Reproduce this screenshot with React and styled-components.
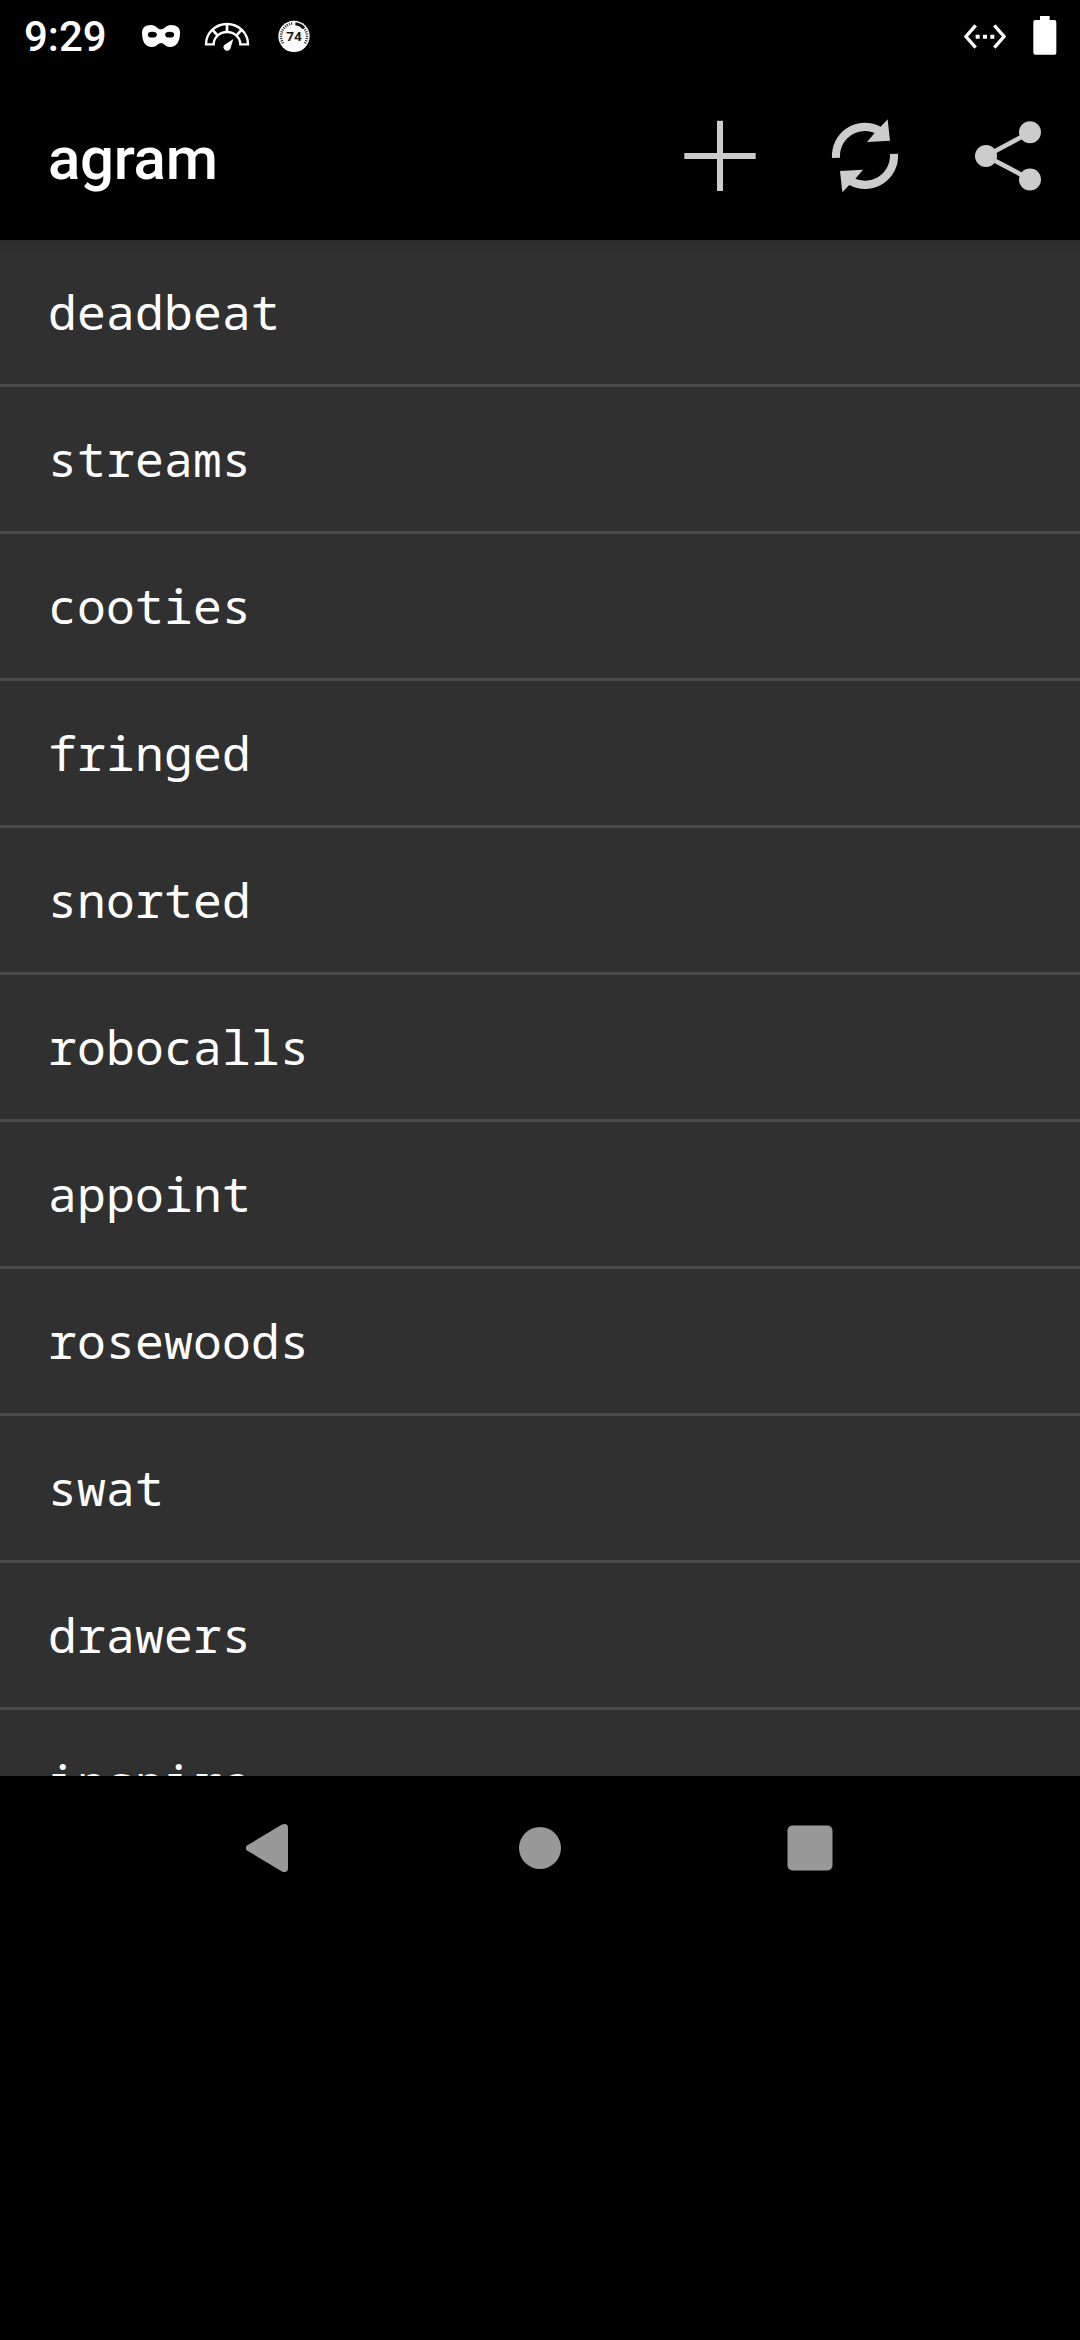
import React from "react";
import styled, { createGlobalStyle } from "styled-components";

const GlobalStyle = createGlobalStyle`
  body {
    margin: 0;
    background: #000;
  }
  * {
    box-sizing: border-box;
  }
`;

const Screen = styled.div`
  display: flex;
  flex-direction: column;
  width: 1080px;
  height: 2340px;
  overflow: hidden;
  background: #000;
  color: #fff;
  font-family: Roboto, "Liberation Sans", sans-serif;
`;

const StatusBar = styled.header`
  display: flex;
  align-items: center;
  justify-content: space-between;
  flex: none;
  height: 72px;
  padding: 0 23px 0 24px;
`;

const StatusGroup = styled.div`
  display: flex;
  align-items: center;
  gap: ${(p) => p.$gap}px;
`;

const Clock = styled.time`
  width: 90px;
  font-size: 42px;
  font-weight: 500;
  line-height: 48px;
  padding-top: 2px;
  white-space: nowrap;
`;

const StatusIcon = styled.svg`
  display: block;
  width: ${(p) => p.$width}px;
  height: 72px;
`;

const BadgeNumber = styled.text`
  font-family: Roboto, "Liberation Sans", sans-serif;
  font-size: 41px;
  font-weight: 700;
  fill: #151515;
`;

const AppBar = styled.div`
  display: flex;
  align-items: center;
  justify-content: space-between;
  flex: none;
  height: 168px;
  padding-left: 48px;
`;

const Title = styled.h1`
  margin: 0;
  padding-top: 5px;
  font-size: 60px;
  font-weight: 500;
  line-height: 72px;
  letter-spacing: -0.3px;
`;

const Actions = styled.div`
  display: flex;
`;

const ActionButton = styled.button`
  width: 144px;
  height: 144px;
  padding: 0;
  border: 0;
  background: none;
  color: #cccccc;
`;

const ActionIcon = styled.svg`
  display: block;
  width: 144px;
  height: 144px;
`;

const WordList = styled.ul`
  flex: none;
  height: 1536px;
  margin: 0;
  padding: 0;
  overflow: hidden;
  list-style: none;
  background: linear-gradient(#2c2c2c, #303030 14px);
`;

const WordRow = styled.li`
  display: flex;
  align-items: center;
  height: 147px;
  padding: 0 48px;
  border-bottom: 3px solid #4a4a4a;
  font-family: "Droid Sans Mono", "Noto Sans Mono", "DejaVu Sans Mono", monospace;
  font-size: 48px;
  line-height: 56px;
  letter-spacing: 0.2px;
`;

const NavBar = styled.nav`
  display: flex;
  justify-content: center;
  align-items: center;
  gap: 126px;
  flex: none;
  height: 144px;
  color: #999999;
`;

const NavButton = styled.button`
  width: 144px;
  height: 144px;
  padding: 0;
  border: 0;
  background: none;
  color: inherit;
`;

const words = [
  "deadbeat",
  "streams",
  "cooties",
  "fringed",
  "snorted",
  "robocalls",
  "appoint",
  "rosewoods",
  "swat",
  "drawers",
  "inspire",
];

// Minute marks round the badge, clockwise from the lower left.
const ticks = Array.from({ length: 25 }, (_, i) => -120 + i * 10).filter(
  (a) => a < 0 || a > 48
);

function MaskIcon() {
  return (
    <StatusIcon $width={38} viewBox="426 0 114 216">
      <path
        fill="#fff"
        d="M453 75C468 75 473 88 483 88S498 75 513 75C531 75 540 84 540 98C540 124 530 141 510 141C495 141 493 129 483 129S471 141 456 141C436 141 426 124 426 98C426 84 435 75 453 75Z"
      />
      <ellipse cx="457" cy="104" rx="13.5" ry="8.500" />
      <ellipse cx="509" cy="104" rx="13.5" ry="8.500" />
    </StatusIcon>
  );
}

function GaugeIcon() {
  return (
    <StatusIcon $width={46} viewBox="612 0 138 216">
      <g fill="none" stroke="#fff" strokeWidth="7">
        <path d="M618 133A63 61 0 0 1 744 133H721A40 37 0 0 0 641 133Z" />
        <path d="M681 73V96M637 89L653 107M725 89L709 107" strokeWidth="8" />
      </g>
      <path fill="#fff" d="M700 117L691 146A10.500 10.500 0 1 1 672 136Z" />
    </StatusIcon>
  );
}

function ScoreBadge() {
  return (
    <StatusIcon $width={32} viewBox="833 0 96 216">
      <circle cx="881" cy="109" r="47" fill="#fff" />
      <g stroke="#222" strokeWidth="3">
        {ticks.map((a) => (
          <path key={a} d="M881 66V74" transform={`rotate(${a} 881 109)`} />
        ))}
      </g>
      <path d="M885 71.500A38 38 0 0 1 910 84" fill="none" stroke="#111" strokeWidth="9" />
      <BadgeNumber x="881" y="124" textAnchor="middle" textLength="47" lengthAdjust="spacingAndGlyphs">
        74
      </BadgeNumber>
    </StatusIcon>
  );
}

function EthernetIcon() {
  return (
    <StatusIcon $width={42} viewBox="71 0 126 216">
      <path d="M106 76L77 109.500L106 143M162 76L191 109.500L162 143" fill="none" stroke="#fff" strokeWidth="10" />
      <path d="M106 104h12v12h-12zM128 104h12v12h-12zM150 104h12v12h-12z" fill="#fff" />
    </StatusIcon>
  );
}

function BatteryIcon() {
  return (
    <StatusIcon $width={24} viewBox="278 0 72 216">
      <path d="M299 48h29v12h14q6 0 6 6v92q0 6-6 6h-57q-6 0-6-6v-92q0-6 6-6h14z" fill="#fff" />
    </StatusIcon>
  );
}

function RefreshArrow({ turned }) {
  return (
    <g transform={turned ? "rotate(180 615 197.5)" : undefined}>
      <path
        fill="currentColor"
        d="M516 204A99 99 0 0 1 662 110L683 88L690 152L621 156L644 129A75 75 0 0 0 540 203Z"
      />
    </g>
  );
}

export default function App() {
  return (
    <>
      <GlobalStyle />
      <Screen>
        <StatusBar>
          <StatusGroup $gap={28}>
            <Clock>9:29</Clock>
            <StatusGroup $gap={28}>
              <StatusGroup $gap={24}>
                <MaskIcon />
                <GaugeIcon />
              </StatusGroup>
              <ScoreBadge />
            </StatusGroup>
          </StatusGroup>
          <StatusGroup $gap={27}>
            <EthernetIcon />
            <BatteryIcon />
          </StatusGroup>
        </StatusBar>
        <AppBar>
          <Title>agram</Title>
          <Actions>
            <ActionButton>
              <ActionIcon viewBox="-36 -18 432 432">
                <path d="M171 92h18v97h98v18h-98v96h-18v-96h-98v-18h98z" fill="currentColor" />
              </ActionIcon>
            </ActionButton>
            <ActionButton>
              <ActionIcon viewBox="396 -18 432 432">
                <RefreshArrow />
                <RefreshArrow turned />
              </ActionIcon>
            </ActionButton>
            <ActionButton>
              <ActionIcon viewBox="108 -18 432 432">
                <path d="M390 127L258 198L390 268" fill="none" stroke="currentColor" strokeWidth="14" />
                <g fill="currentColor">
                  <circle cx="390" cy="127" r="33" />
                  <circle cx="258" cy="198" r="33" />
                  <circle cx="390" cy="268.500" r="33" />
                </g>
              </ActionIcon>
            </ActionButton>
          </Actions>
        </AppBar>
        <WordList>
          {words.map((word) => (
            <WordRow key={word}>{word}</WordRow>
          ))}
        </WordList>
        <NavBar>
          <NavButton>
            <ActionIcon viewBox="-72 -72 144 144">
              <path
                d="M-23 -2.500L12 -23.400Q18 -25.500 18 -20V20Q18 25.500 12 23.400L-23 2.500Q-25.500 0 -23 -2.500Z"
                fill="currentColor"
              />
            </ActionIcon>
          </NavButton>
          <NavButton>
            <ActionIcon viewBox="-72 -72 144 144">
              <circle r="21" fill="currentColor" />
            </ActionIcon>
          </NavButton>
          <NavButton>
            <ActionIcon viewBox="-72 -72 144 144">
              <rect x="-22.500" y="-22.500" width="45" height="45" rx="5" fill="currentColor" />
            </ActionIcon>
          </NavButton>
        </NavBar>
      </Screen>
    </>
  );
}
